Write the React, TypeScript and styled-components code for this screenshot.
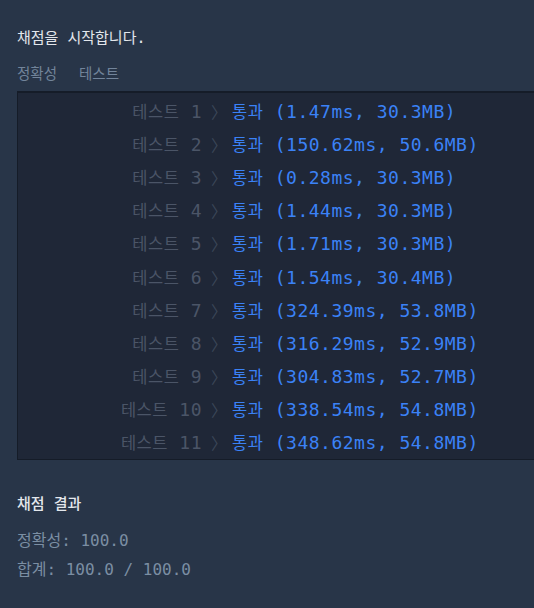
import React from "react";
import styled, { createGlobalStyle } from "styled-components";

const GlobalStyle = createGlobalStyle`
  html, body {
    margin: 0;
    padding: 0;
    background-color: #283548;
    overflow: hidden;
  }
`;

const MONO = `"DejaVu Sans Mono", "Noto Sans CJK KR", monospace`;

const S = {
  ConsoleLayout: styled.div`
    width: 534px;
    height: 608px;
    box-sizing: border-box;
    padding: 27px 0 0 17px;
    background-color: #283548;
    font-family: ${MONO};
    overflow: hidden;
  `,
  StartText: styled.p`
    margin: 0;
    font-size: 15px;
    line-height: 22px;
    color: #e3e7ec;
  `,
  TabRow: styled.div`
    display: flex;
    gap: 22px;
    margin-top: 14px;
    font-size: 14.5px;
    line-height: 22px;
    color: #72849a;
  `,
  ResultTable: styled.div`
    margin-top: 6px;
    width: 560px;
    box-sizing: border-box;
    padding-top: 1px;
    border-top: 2px solid #151c28;
    border-left: 1px solid #151c28;
    border-bottom: 1px solid #151c28;
    background-color: #1f2737;
  `,
  ResultRow: styled.div`
    display: grid;
    grid-template-columns: 184px 30px 1fr;
    align-items: center;
    height: 33.2px;
  `,
  Label: styled.span`
    text-align: right;
    font-size: 18px;
    letter-spacing: 0.5px;
    color: #4b5567;
    white-space: nowrap;
  `,
  Arrow: styled.span`
    padding-left: 9px;
    font-size: 16px;
    color: #3b4657;
  `,
  Result: styled.span`
    font-size: 18px;
    letter-spacing: 0.5px;
    color: #3b82f6;
    white-space: nowrap;
  `,
  Ko: styled.span`
    font-size: 16.5px;
  `,
  SummaryTitle: styled.h4`
    margin: 33px 0 0;
    font-size: 15px;
    font-weight: 500;
    line-height: 22px;
    color: #e3e7ec;
  `,
  SummaryLine: styled.p<{ $first?: boolean }>`
    margin: ${(p) => (p.$first ? "15px" : "7px")} 0 0;
    font-size: 16px;
    line-height: 22px;
    color: #7b8ea3;
  `,
};

const results = [
  "1.47ms, 30.3MB",
  "150.62ms, 50.6MB",
  "0.28ms, 30.3MB",
  "1.44ms, 30.3MB",
  "1.71ms, 30.3MB",
  "1.54ms, 30.4MB",
  "324.39ms, 53.8MB",
  "316.29ms, 52.9MB",
  "304.83ms, 52.7MB",
  "338.54ms, 54.8MB",
  "348.62ms, 54.8MB",
];

const App = () => {
  return (
    <>
      <GlobalStyle />
      <S.ConsoleLayout>
        <S.StartText>채점을 시작합니다.</S.StartText>
        <S.TabRow>
          <span>정확성</span>
          <span>테스트</span>
        </S.TabRow>
        <S.ResultTable>
          {results.map((r, i) => (
            <S.ResultRow key={i}>
              <S.Label>
                <S.Ko>테스트</S.Ko> {i + 1}
              </S.Label>
              <S.Arrow>〉</S.Arrow>
              <S.Result>
                <S.Ko>통과</S.Ko> ({r})
              </S.Result>
            </S.ResultRow>
          ))}
        </S.ResultTable>
        <S.SummaryTitle>채점 결과</S.SummaryTitle>
        <S.SummaryLine $first>정확성: 100.0</S.SummaryLine>
        <S.SummaryLine>합계: 100.0 / 100.0</S.SummaryLine>
      </S.ConsoleLayout>
    </>
  );
};

export default App;
